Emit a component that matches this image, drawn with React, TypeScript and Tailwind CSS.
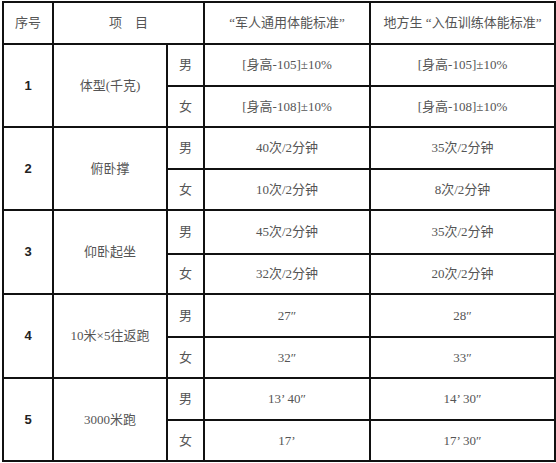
import React from 'react';

type Row = {
  no: string;
  item: string;
  male: [string, string];
  female: [string, string];
  h: [string, string];
};

const rows: Row[] = [
  { no: '1', item: '体型(千克)', male: ['[身高-105]±10%', '[身高-105]±10%'], female: ['[身高-108]±10%', '[身高-108]±10%'], h: ['h-[42px]', 'h-[41px]'] },
  { no: '2', item: '俯卧撑', male: ['40次/2分钟', '35次/2分钟'], female: ['10次/2分钟', '8次/2分钟'], h: ['h-[42px]', 'h-[41px]'] },
  { no: '3', item: '仰卧起坐', male: ['45次/2分钟', '35次/2分钟'], female: ['32次/2分钟', '20次/2分钟'], h: ['h-[44px]', 'h-[40px]'] },
  { no: '4', item: '10米×5往返跑', male: ['27″', '28″'], female: ['32″', '33″'], h: ['h-[43px]', 'h-[41px]'] },
  { no: '5', item: '3000米跑', male: ['13’ 40″', '14’ 30″'], female: ['17’', '17’ 30″'], h: ['h-[42px]', 'h-[41px]'] },
];

const cell = 'border-2 border-[#111] text-center align-middle p-0';

const App: React.FC = () => {
  return (
    <div
      className="w-[556px] h-[463px] bg-white pt-px pl-[2px]"
      style={{ fontFamily: '"Liberation Serif", "Noto Sans CJK SC", serif' }}
    >
      <table className="table-fixed border-collapse text-[13px] text-[#555] w-[552px]">
        <colgroup>
          <col className="w-[50px]" />
          <col className="w-[114px]" />
          <col className="w-[37px]" />
          <col className="w-[166px]" />
          <col className="w-[185px]" />
        </colgroup>
        <thead>
          <tr className="h-[42px]">
            <th className={`${cell} font-normal`}>序号</th>
            <th className={`${cell} font-normal`} colSpan={2}>项　目</th>
            <th className={`${cell} font-normal`}>“军人通用体能标准”</th>
            <th className={`${cell} font-normal`}>地方生 “入伍训练体能标准”</th>
          </tr>
        </thead>
        <tbody>
          {rows.map((r) => (
            <React.Fragment key={r.no}>
              <tr className={r.h[0]}>
                <td
                  rowSpan={2}
                  className={`${cell} font-bold text-[#222]`}
                  style={{ fontFamily: '"Liberation Sans", sans-serif' }}
                >
                  {r.no}
                </td>
                <td rowSpan={2} className={cell}>{r.item}</td>
                <td className={cell}>男</td>
                <td className={cell}>{r.male[0]}</td>
                <td className={cell}>{r.male[1]}</td>
              </tr>
              <tr className={r.h[1]}>
                <td className={cell}>女</td>
                <td className={cell}>{r.female[0]}</td>
                <td className={cell}>{r.female[1]}</td>
              </tr>
            </React.Fragment>
          ))}
        </tbody>
      </table>
    </div>
  );
};

export default App;
